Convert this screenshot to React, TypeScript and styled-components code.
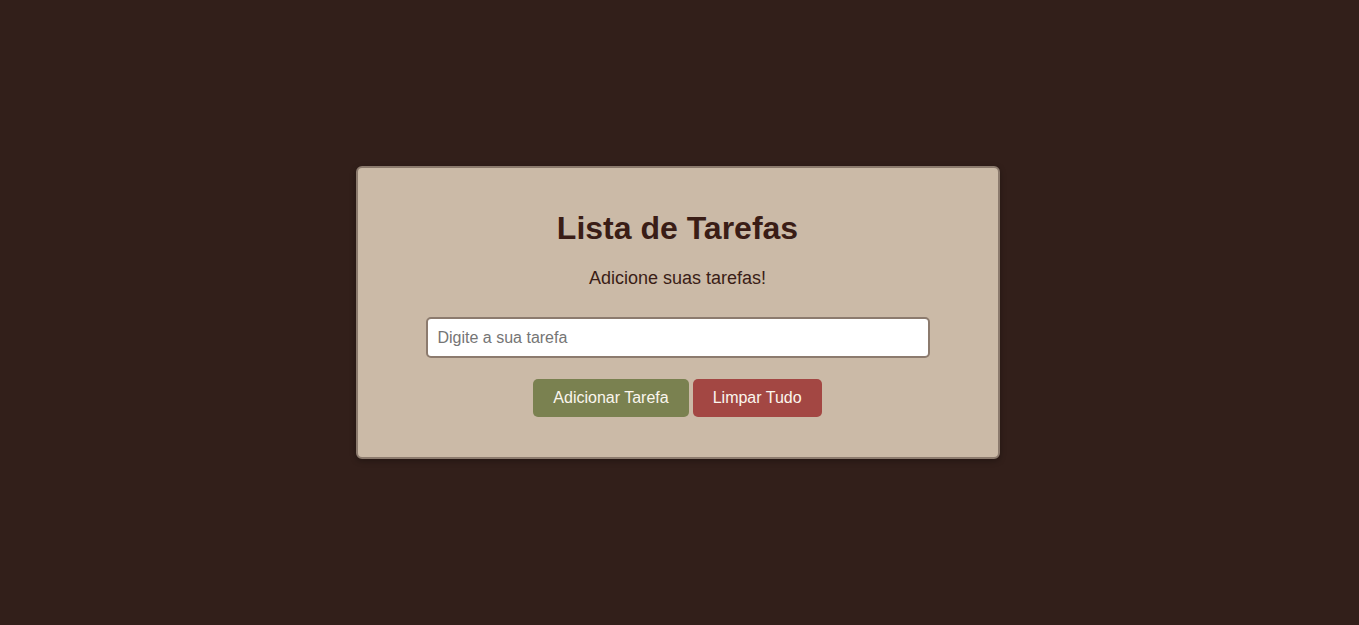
import React from "react";
import styled, { createGlobalStyle } from "styled-components";

const GlobalStyle = createGlobalStyle`
  html, body {
    margin: 0;
    padding: 0;
    background: #321f1a;
    font-family: "Liberation Sans", Arial, sans-serif;
  }
`;

const Page = styled.div`
  box-sizing: border-box;
  min-height: 100vh;
  padding-right: 4px;
  display: flex;
  align-items: center;
  justify-content: center;
`;

const Card = styled.div`
  box-sizing: content-box;
  width: 600px;
  padding: 20px;
  background: #cbbaa7;
  border: 2px solid #8c7b6e;
  border-radius: 6px;
  box-shadow: 0 2px 6px rgba(0, 0, 0, 0.3);
  display: flex;
  flex-direction: column;
  align-items: center;
`;

const Title = styled.h1`
  margin: 22px 0 0;
  font-size: 32px;
  font-weight: bold;
  line-height: 37px;
  color: #3a1d16;
`;

const Subtitle = styled.p`
  margin: 21px 0 0;
  font-size: 18px;
  line-height: 21px;
  color: #3a1d16;
`;

const Input = styled.input`
  box-sizing: border-box;
  margin-top: 28px;
  width: 504px;
  height: 41px;
  padding: 10px;
  border: 2px solid #8c7b6e;
  border-radius: 5px;
  background: #fff;
  font-family: "Liberation Sans", Arial, sans-serif;
  font-size: 16px;
  color: #333;
  outline: none;
  &::placeholder {
    color: #757575;
  }
`;

const ButtonRow = styled.div`
  display: flex;
  gap: 4px;
  margin: 21px 0 20px;
`;

const Button = styled.button<{ $variant: "add" | "clear" }>`
  height: 38px;
  padding: 0 20px;
  border: none;
  border-radius: 5px;
  background: ${(p) => (p.$variant === "add" ? "#7a8150" : "#a34743")};
  color: #fbf6ee;
  font-family: "Liberation Sans", Arial, sans-serif;
  font-size: 16px;
  cursor: pointer;
`;

export default function App() {
  return (
    <>
      <GlobalStyle />
      <Page>
        <Card>
          <Title>Lista de Tarefas</Title>
          <Subtitle>Adicione suas tarefas!</Subtitle>
          <Input placeholder="Digite a sua tarefa" />
          <ButtonRow>
            <Button $variant="add">Adicionar Tarefa</Button>
            <Button $variant="clear">Limpar Tudo</Button>
          </ButtonRow>
        </Card>
      </Page>
    </>
  );
}
